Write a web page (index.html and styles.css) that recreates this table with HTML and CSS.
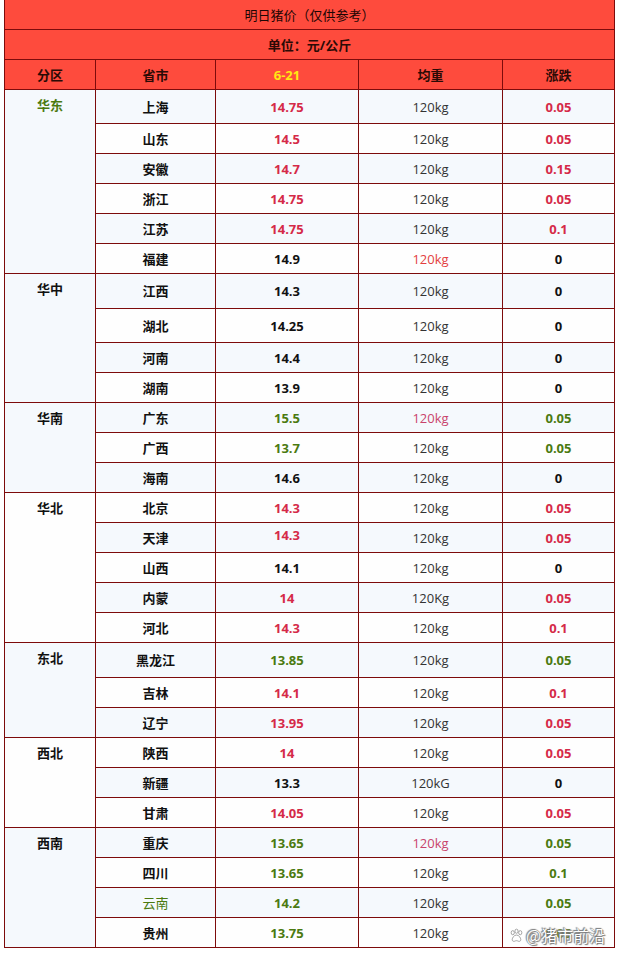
FILE: index.html
```html
<!DOCTYPE html>
<html lang="zh-CN">
<head>
<meta charset="utf-8">
<title>明日猪价</title>
<link rel="stylesheet" href="styles.css">
</head>
<body>
<div class="page">
<table class="price">
  <colgroup>
    <col class="c-area"><col class="c-prov"><col class="c-price"><col class="c-wt"><col class="c-chg">
  </colgroup>
  <thead>
    <tr class="h"><th colspan="5" class="title">明日猪价（仅供参考）</th></tr>
    <tr class="h"><th colspan="5" class="unit">单位：元/公斤</th></tr>
    <tr class="h"><th>分区</th><th>省市</th><th class="date">6-21</th><th>均重</th><th>涨跌</th></tr>
  </thead>
  <tbody>
    <tr class="odd t34"><td rowspan="6" class="area green">华东</td><td class="prov">上海</td><td class="num red">14.75</td><td class="wt">120kg</td><td class="num red">0.05</td></tr>
    <tr class="even"><td class="prov">山东</td><td class="num red">14.5</td><td class="wt">120kg</td><td class="num red">0.05</td></tr>
    <tr class="odd"><td class="prov">安徽</td><td class="num red">14.7</td><td class="wt">120kg</td><td class="num red">0.15</td></tr>
    <tr class="even"><td class="prov">浙江</td><td class="num red">14.75</td><td class="wt">120kg</td><td class="num red">0.05</td></tr>
    <tr class="odd"><td class="prov">江苏</td><td class="num red">14.75</td><td class="wt">120kg</td><td class="num red">0.1</td></tr>
    <tr class="even"><td class="prov">福建</td><td class="num">14.9</td><td class="wt wt-red">120kg</td><td class="num">0</td></tr>

    <tr class="odd t35"><td rowspan="4" class="area">华中</td><td class="prov">江西</td><td class="num">14.3</td><td class="wt">120kg</td><td class="num">0</td></tr>
    <tr class="even t34"><td class="prov">湖北</td><td class="num">14.25</td><td class="wt">120kg</td><td class="num">0</td></tr>
    <tr class="odd"><td class="prov">河南</td><td class="num">14.4</td><td class="wt">120kg</td><td class="num">0</td></tr>
    <tr class="even"><td class="prov">湖南</td><td class="num">13.9</td><td class="wt">120kg</td><td class="num">0</td></tr>

    <tr class="odd"><td rowspan="3" class="area">华南</td><td class="prov">广东</td><td class="num green">15.5</td><td class="wt wt-pink">120kg</td><td class="num green">0.05</td></tr>
    <tr class="even"><td class="prov">广西</td><td class="num green">13.7</td><td class="wt">120kg</td><td class="num green">0.05</td></tr>
    <tr class="odd"><td class="prov">海南</td><td class="num">14.6</td><td class="wt">120kg</td><td class="num">0</td></tr>

    <tr class="even"><td rowspan="5" class="area">华北</td><td class="prov">北京</td><td class="num red">14.3</td><td class="wt">120kg</td><td class="num red">0.05</td></tr>
    <tr class="odd"><td class="prov">天津</td><td class="num red up">14.3</td><td class="wt">120kg</td><td class="num red">0.05</td></tr>
    <tr class="even"><td class="prov">山西</td><td class="num">14.1</td><td class="wt">120kg</td><td class="num">0</td></tr>
    <tr class="odd"><td class="prov">内蒙</td><td class="num red">14</td><td class="wt">120Kg</td><td class="num red">0.05</td></tr>
    <tr class="even"><td class="prov">河北</td><td class="num red">14.3</td><td class="wt">120kg</td><td class="num red">0.1</td></tr>

    <tr class="odd t35"><td rowspan="3" class="area">东北</td><td class="prov">黑龙江</td><td class="num green">13.85</td><td class="wt">120kg</td><td class="num green">0.05</td></tr>
    <tr class="even"><td class="prov">吉林</td><td class="num red">14.1</td><td class="wt">120kg</td><td class="num red">0.1</td></tr>
    <tr class="odd"><td class="prov">辽宁</td><td class="num red">13.95</td><td class="wt">120kg</td><td class="num red">0.05</td></tr>

    <tr class="even"><td rowspan="3" class="area">西北</td><td class="prov">陕西</td><td class="num red">14</td><td class="wt">120kg</td><td class="num red">0.05</td></tr>
    <tr class="odd"><td class="prov">新疆</td><td class="num">13.3</td><td class="wt">120kG</td><td class="num">0</td></tr>
    <tr class="even"><td class="prov">甘肃</td><td class="num red">14.05</td><td class="wt">120kg</td><td class="num red">0.05</td></tr>

    <tr class="odd"><td rowspan="4" class="area">西南</td><td class="prov">重庆</td><td class="num green">13.65</td><td class="wt wt-pink">120kg</td><td class="num green">0.05</td></tr>
    <tr class="even"><td class="prov">四川</td><td class="num green">13.65</td><td class="wt">120kg</td><td class="num green">0.1</td></tr>
    <tr class="odd"><td class="prov prov-green">云南</td><td class="num green">14.2</td><td class="wt">120kg</td><td class="num green">0.05</td></tr>
    <tr class="even"><td class="prov">贵州</td><td class="num green">13.75</td><td class="wt">120kg</td><td class="num green hidden-under">0.05</td></tr>
  </tbody>
</table>
<div class="watermark">
  <svg class="paw" viewBox="0 0 16 16" width="15" height="15" aria-hidden="true">
    <ellipse cx="4" cy="5" rx="1.7" ry="2.2" fill="#fff" stroke="#888" stroke-width="0.8"/>
    <ellipse cx="8" cy="3.4" rx="1.7" ry="2.2" fill="#fff" stroke="#888" stroke-width="0.8"/>
    <ellipse cx="12" cy="5" rx="1.7" ry="2.2" fill="#fff" stroke="#888" stroke-width="0.8"/>
    <path d="M8 7.5c-2.6 0-4.6 3-4.6 5 0 1.6 1.6 2 2.6 1.6.8-.3 1.3-.6 2-.6s1.2.3 2 .6c1 .4 2.6 0 2.6-1.6 0-2-2-5-4.6-5z" fill="#fff" stroke="#888" stroke-width="0.8"/>
  </svg>
  <span class="wm-text">@猪市前沿</span>
</div>
</div>
</body>
</html>
```
FILE: styles.css
```css
html, body {
  margin: 0;
  padding: 0;
  background: #ffffff;
}
.page {
  position: relative;
  width: 620px;
  height: 956px;
  overflow: hidden;
}
.price {
  border-collapse: collapse;
  width: 610px;
  margin: -1px 0 0 4px;
  table-layout: fixed;
  font-family: "Open Sans", "Noto Sans CJK SC", sans-serif;
  font-size: 13px;
  color: #111;
}
.c-area { width: 91px; }
.c-prov { width: 120px; }
.c-price { width: 143px; }
.c-wt { width: 144px; }
.c-chg { width: 112px; }
.price th, .price td {
  border: 1px solid #7d0b0b;
  padding: 0;
  text-align: center;
  vertical-align: middle;
  line-height: 18px;
}
.price tr { height: 30px; }
.price tr.t34 { height: 34px; }
.price tr.t35 { height: 35px; }
.price thead th {
  background: #fe4b3d;
  font-weight: 700;
  color: #2a0a05;
}
.price thead th.title { font-weight: 400; color: #1d0604; }
.price thead th.date { color: #ffe812; }
.price tr.odd td { background: #f5f9fd; }
.price tr.even td { background: #fefefe; }
.price td.area {
  vertical-align: top;
  padding-top: 5px;
  line-height: 20px;
  font-weight: 700;
}
.price td.prov { font-weight: 700; }
.price td.prov-green { font-weight: 400; color: #4b7a10; }
.price td.num { font-weight: 700; }
.price td.up { padding-bottom: 6px; }
.price td.wt { font-weight: 400; color: #333; }
.price td.wt-red { color: #e3403f; }
.price td.wt-pink { color: #c9436c; }
.price .red { color: #d52a48; }
.price .green { color: #4b7a10; }
.price td.hidden-under { color: #6d8a2a; }
.watermark {
  position: absolute;
  left: 509px;
  top: 924px;
  display: flex;
  align-items: center;
  gap: 2px;
  font-family: "Noto Sans CJK SC", sans-serif;
  font-size: 16px;
  line-height: 22px;
  color: #ffffff;
  text-shadow: 0 0 1px #555, 1px 1px 1px #777, -1px -1px 1px #777;
}
.paw { display: block; }
```
